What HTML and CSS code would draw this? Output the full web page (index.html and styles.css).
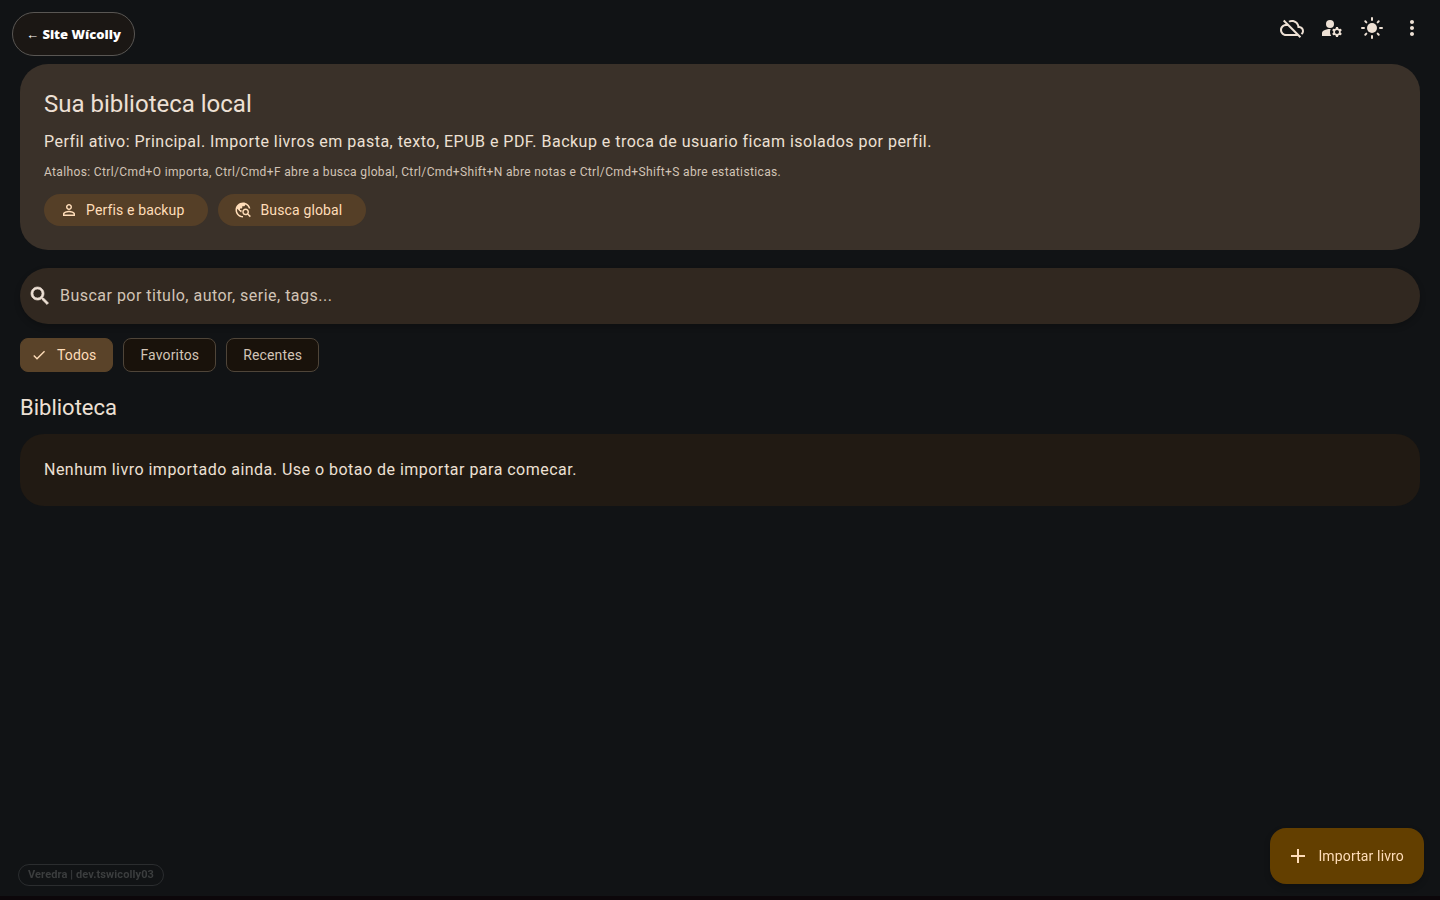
FILE: index.html
```html
<!DOCTYPE html>
<html lang="pt-BR">
<head>
    <meta charset="UTF-8">
    <meta name="viewport" content="width=device-width, initial-scale=1.0">
    <title>Veredra</title>
    <link rel="stylesheet" href="styles.css">
</head>
<body>
    <header class="topbar">
        <a class="site-link" href="#">← Site Wícolly</a>
        <div class="actions">
            <button class="icon-btn" type="button" aria-label="Nuvem desconectada">
                <svg viewBox="0 0 24 24"><path d="M24 15c0-2.64-2.05-4.78-4.65-4.96C18.67 6.59 15.64 4 12 4c-1.33 0-2.57.36-3.65.97l1.49 1.49C10.51 6.17 11.23 6 12 6c3.04 0 5.5 2.46 5.5 5.5v.5H19c1.66 0 3 1.34 3 3 0 .99-.48 1.85-1.21 2.4l1.41 1.41c1.09-.92 1.8-2.27 1.8-3.81zM4.41 3.86L3 5.27l2.77 2.77h-.42C2.34 8.36 0 10.91 0 14c0 3.31 2.69 6 6 6h11.73l2 2 1.41-1.41L4.41 3.86zM6 18c-2.21 0-4-1.79-4-4s1.79-4 4-4h1.73l8 8H6z"/></svg>
            </button>
            <button class="icon-btn" type="button" aria-label="Perfis">
                <svg viewBox="0 0 24 24"><circle cx="10" cy="8" r="4"/><path d="M10.67 13.02C10.45 13.01 10.23 13 10 13c-2.42 0-4.68.67-6.61 1.82C2.51 15.34 2 16.32 2 17.35V20h9.26C10.47 18.87 10 17.49 10 16c0-1.07.25-2.07.67-2.98zM20.75 16c0-.22-.03-.42-.06-.63l1.14-1.01-1-1.73-1.45.49c-.32-.27-.68-.48-1.08-.63L18 11h-2l-.3 1.49c-.4.15-.76.36-1.08.63l-1.45-.49-1 1.73 1.14 1.01c-.03.21-.06.41-.06.63s.03.42.06.63l-1.14 1.01 1 1.73 1.45-.49c.32.27.68.48 1.08.63L16 21h2l.3-1.49c.4-.15.76-.36 1.08-.63l1.45.49 1-1.73-1.14-1.01c.03-.21.06-.41.06-.63zM17 18c-1.1 0-2-.9-2-2s.9-2 2-2 2 .9 2 2-.9 2-2 2z"/></svg>
            </button>
            <button class="icon-btn" type="button" aria-label="Tema">
                <svg viewBox="0 0 24 24"><circle cx="12" cy="12" r="5"/><path class="rays" d="M12 2v2M12 20v2M2 12h2M20 12h2M5.3 5.3l1.05 1.05M17.65 17.65l1.05 1.05M5.3 18.7l1.05-1.05M17.65 6.35L18.7 5.3"/></svg>
            </button>
            <button class="icon-btn" type="button" aria-label="Mais opcoes">
                <svg viewBox="0 0 24 24"><path d="M12 8c1.1 0 2-.9 2-2s-.9-2-2-2-2 .9-2 2 .9 2 2 2zm0 2c-1.1 0-2 .9-2 2s.9 2 2 2 2-.9 2-2-.9-2-2-2zm0 6c-1.1 0-2 .9-2 2s.9 2 2 2 2-.9 2-2-.9-2-2-2z"/></svg>
            </button>
        </div>
    </header>

    <main class="content">
        <section class="hero">
            <h1>Sua biblioteca local</h1>
            <p class="body-text">Perfil ativo: Principal. Importe livros em pasta, texto, EPUB e PDF. Backup e troca de usuario ficam isolados por perfil.</p>
            <p class="hint">Atalhos: Ctrl/Cmd+O importa, Ctrl/Cmd+F abre a busca global, Ctrl/Cmd+Shift+N abre notas e Ctrl/Cmd+Shift+S abre estatisticas.</p>
            <div class="row">
                <button class="tonal-btn" type="button">
                    <svg viewBox="0 0 24 24"><path d="M12 5.9c1.16 0 2.1.94 2.1 2.1s-.94 2.1-2.1 2.1S9.9 9.16 9.9 8s.94-2.1 2.1-2.1m0 9c2.97 0 6.1 1.46 6.1 2.1v1.1H5.9V17c0-.64 3.13-2.1 6.1-2.1M12 4C9.79 4 8 5.79 8 8s1.79 4 4 4 4-1.79 4-4-1.79-4-4-4zm0 9c-2.67 0-8 1.34-8 4v3h16v-3c0-2.66-5.33-4-8-4z"/></svg>
                    Perfis e backup
                </button>
                <button class="tonal-btn" type="button">
                    <svg viewBox="0 0 24 24"><path d="M19.3 16.9c.4-.7.7-1.5.7-2.4 0-2.5-2-4.5-4.5-4.5S11 12 11 14.5s2 4.5 4.5 4.5c.9 0 1.7-.3 2.4-.7l3.2 3.2 1.4-1.4-3.2-3.2zM15.5 17c-1.4 0-2.5-1.1-2.5-2.5s1.1-2.5 2.5-2.5 2.5 1.1 2.5 2.5-1.1 2.5-2.5 2.5zM12 20v2C6.48 22 2 17.52 2 12S6.48 2 12 2c4.84 0 8.87 3.44 9.8 8h-2.07c-.64-2.46-2.4-4.47-4.73-5.41V5c0 1.1-.9 2-2 2h-2v2c0 .55-.45 1-1 1H8v2h2v3H9l-4.79-4.79C4.08 10.79 4 11.38 4 12c0 4.41 3.59 8 8 8z"/></svg>
                    Busca global
                </button>
            </div>
        </section>

        <label class="search">
            <svg viewBox="0 0 24 24"><path d="M15.5 14h-.79l-.28-.27C15.41 12.59 16 11.11 16 9.5 16 5.91 13.09 3 9.5 3S3 5.91 3 9.5 5.91 16 9.5 16c1.61 0 3.09-.59 4.23-1.57l.27.28v.79l5 4.99L20.49 19l-4.99-5zm-6 0C7.01 14 5 11.99 5 9.5S7.01 5 9.5 5 14 7.01 14 9.5 11.99 14 9.5 14z"/></svg>
            <input type="text" placeholder="Buscar por titulo, autor, serie, tags..." aria-label="Buscar">
        </label>

        <div class="row filters">
            <button class="chip selected" type="button">
                <svg viewBox="0 0 24 24"><path d="M9 16.17L4.83 12l-1.42 1.41L9 19 21 7l-1.41-1.41z"/></svg>
                Todos
            </button>
            <button class="chip" type="button">Favoritos</button>
            <button class="chip" type="button">Recentes</button>
        </div>

        <h2>Biblioteca</h2>
        <section class="empty">
            <p class="body-text">Nenhum livro importado ainda. Use o botao de importar para comecar.</p>
        </section>
    </main>

    <div class="badge">Veredra | dev.tswicolly03</div>
    <button class="fab" type="button">
        <svg viewBox="0 0 24 24"><path d="M19 13h-6v6h-2v-6H5v-2h6V5h2v6h6v2z"/></svg>
        Importar livro
    </button>
</body>
</html>
```
FILE: styles.css
```css
* {
    box-sizing: border-box;
}
body {
    margin: 0;
    min-height: 100vh;
    border-bottom: 4px solid #0c070a;
    background: #111315;
    color: #ede0d4;
    font-family: Roboto, sans-serif;
}
h1, h2, p {
    margin: 0;
    font-weight: 400;
}
button {
    border: none;
    font: 400 14px/20px Roboto, sans-serif;
    letter-spacing: 0.01em;
    cursor: pointer;
}
svg {
    display: block;
    flex: none;
    width: 18px;
    height: 18px;
    fill: currentColor;
}
.topbar {
    display: flex;
    justify-content: space-between;
    align-items: flex-start;
    height: 56px;
    padding: 0 8px 0 12px;
}
.site-link {
    margin-top: 12px;
    padding: 11px 13px;
    border: 1px solid #595653;
    border-radius: 22px;
    background: #1b1714;
    color: #fff;
    font: 900 13px/20px "Noto Sans", sans-serif;
    text-decoration: none;
}
.actions {
    display: flex;
    padding-top: 8px;
}
.icon-btn {
    width: 40px;
    height: 40px;
    padding: 8px;
    background: none;
    color: #ede0d4;
}
.icon-btn svg {
    width: 24px;
    height: 24px;
}
.rays {
    stroke: currentColor;
    stroke-width: 2;
    stroke-linecap: round;
}
.content {
    padding: 8px 20px 100px;
}
.hero {
    padding: 24px;
    border-radius: 28px;
    background: #3a3129;
}
h1 {
    margin-bottom: 10px;
    font-size: 24px;
    line-height: 32px;
}
.body-text {
    font-size: 16px;
    line-height: 24px;
    letter-spacing: 0.03em;
}
.hint {
    margin: 10px 0 14px;
    color: #d2c4b6;
    font-size: 12px;
    line-height: 16px;
    letter-spacing: 0.03em;
}
.row {
    display: flex;
    flex-wrap: wrap;
    gap: 10px;
}
.tonal-btn {
    display: flex;
    align-items: center;
    gap: 8px;
    height: 32px;
    padding: 0 24px 0 16px;
    border-radius: 16px;
    background: #553f27;
    color: #ffddb9;
}
.search {
    display: flex;
    align-items: center;
    gap: 8px;
    height: 56px;
    margin: 18px 0 14px;
    padding: 0 8px;
    border-radius: 28px;
    background: #312820;
    box-shadow: 0 3px 6px rgba(0, 0, 0, 0.2);
}
.search svg {
    width: 24px;
    height: 24px;
    stroke: currentColor;
    stroke-width: 0.7;
}
.search input {
    flex: 1;
    min-width: 0;
    padding: 0;
    border: none;
    outline: none;
    background: none;
    color: #ede0d4;
    font: 400 16px/24px Roboto, sans-serif;
    letter-spacing: 0.03em;
}
.search input::placeholder {
    color: #d2c4b6;
    opacity: 1;
}
.chip {
    height: 34px;
    padding: 0 16px;
    border: 1px solid #4f4539;
    border-radius: 8px;
    background: #19120b;
    color: #d2c4b6;
}
.chip.selected {
    display: flex;
    align-items: center;
    gap: 10px;
    padding: 0 16px 0 10px;
    border-color: #5a4329;
    background: #5a4329;
    color: #ffddb9;
}
.chip svg {
    width: 16px;
    height: 16px;
}
h2 {
    margin: 22px 0 12px;
    font-size: 22px;
    line-height: 28px;
}
.empty {
    padding: 24px;
    border-radius: 24px;
    background: #211a13;
}
.badge {
    position: fixed;
    left: 18px;
    bottom: 14px;
    padding: 2px 9px;
    border: 1px solid #2b2d2f;
    border-radius: 11px;
    color: #3b3d3e;
    font-size: 11px;
    font-weight: 700;
    line-height: 16px;
    letter-spacing: 0.01em;
}
.fab {
    position: fixed;
    right: 16px;
    bottom: 16px;
    display: flex;
    align-items: center;
    gap: 8px;
    height: 56px;
    padding: 0 20px 0 16px;
    border-radius: 16px;
    background: #633f00;
    color: #ffddb9;
    box-shadow: 0 3px 6px rgba(0, 0, 0, 0.2);
}
.fab svg {
    width: 24px;
    height: 24px;
}
```
